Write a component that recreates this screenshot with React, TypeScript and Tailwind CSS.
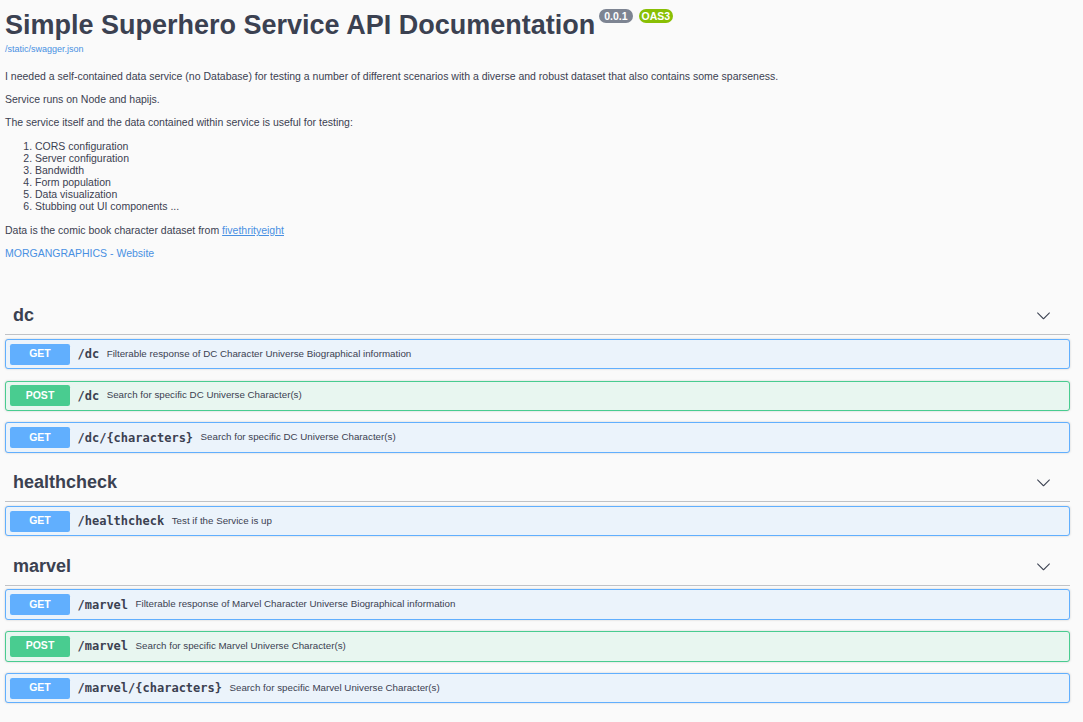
import React from "react";

type Op = {
  method: "GET" | "POST";
  path: string;
  summary: string;
};

type Tag = {
  name: string;
  ops: Op[];
};

const tags: Tag[] = [
  {
    name: "dc",
    ops: [
      { method: "GET", path: "/dc", summary: "Filterable response of DC Character Universe Biographical information" },
      { method: "POST", path: "/dc", summary: "Search for specific DC Universe Character(s)" },
      { method: "GET", path: "/dc/{characters}", summary: "Search for specific DC Universe Character(s)" },
    ],
  },
  {
    name: "healthcheck",
    ops: [{ method: "GET", path: "/healthcheck", summary: "Test if the Service is up" }],
  },
  {
    name: "marvel",
    ops: [
      { method: "GET", path: "/marvel", summary: "Filterable response of Marvel Character Universe Biographical information" },
      { method: "POST", path: "/marvel", summary: "Search for specific Marvel Universe Character(s)" },
      { method: "GET", path: "/marvel/{characters}", summary: "Search for specific Marvel Universe Character(s)" },
    ],
  },
];

function Chevron() {
  return (
    <svg width="15" height="15" viewBox="0 0 20 20" className="fill-[#3b4151]">
      <path d="M17.418 6.109c.272-.268.709-.268.979 0s.271.701 0 .969l-7.908 7.83c-.27.268-.707.268-.979 0l-7.908-7.83c-.27-.268-.27-.701 0-.969.271-.268.709-.268.979 0L10 13.25l7.418-7.141z" />
    </svg>
  );
}

function OpBlock({ op }: { op: Op }) {
  const isGet = op.method === "GET";
  return (
    <div
      className={
        isGet
          ? "mb-[11.25px] flex h-[30.5px] items-center rounded-[3px] border border-[#61affe] bg-[#ebf3fb] px-[4px] shadow-[0_0_2.25px_rgba(0,0,0,0.19)]"
          : "mb-[11.25px] flex h-[30.5px] items-center rounded-[3px] border border-[#49cc90] bg-[#e8f6f0] px-[4px] shadow-[0_0_2.25px_rgba(0,0,0,0.19)]"
      }
    >
      <span
        className={
          isGet
            ? "flex h-[21px] w-[60px] items-center justify-center rounded-[2.25px] bg-[#61affe] text-[10.5px] font-bold text-white"
            : "flex h-[21px] w-[60px] items-center justify-center rounded-[2.25px] bg-[#49cc90] text-[10.5px] font-bold text-white"
        }
      >
        {op.method}
      </span>
      <span className="px-[7.5px] font-['DejaVu_Sans_Mono',monospace] text-[12px] font-bold text-[#3b4151]">
        {op.path}
      </span>
      <span className="text-[9.75px] text-[#3b4151]">{op.summary}</span>
    </div>
  );
}

function TagSection({ tag }: { tag: Tag }) {
  return (
    <section className="flex flex-col">
      <div className="mb-[3.75px] flex h-[38px] items-center justify-between border-b border-[rgba(59,65,81,0.3)] pl-[8px] pr-[19px]">
        <h3 className="text-[18px] font-bold text-[#3b4151]">{tag.name}</h3>
        <Chevron />
      </div>
      <div>
        {tag.ops.map((op, i) => (
          <OpBlock key={i} op={op} />
        ))}
      </div>
    </section>
  );
}

export default function App() {
  return (
    <div className="min-h-[722px] bg-[#fafafa] pl-[5px] pr-[13px] pt-[10px] font-['Liberation_Sans',Arial,sans-serif] text-[#3b4151]">
      <div className="flex items-start">
        <h2 className="text-[27px] font-bold leading-[31px]">Simple Superhero Service API Documentation</h2>
        <span className="-mt-px ml-[4px] flex gap-[6px]">
          <span className="rounded-full bg-[#7d8492] px-[5px] py-[2px] text-[10.5px] font-bold leading-[10px] text-white">
            0.0.1
          </span>
          <span className="rounded-full bg-[#89bf04] px-[3px] py-[2px] text-[10.5px] font-bold leading-[10px] text-white">
            OAS3
          </span>
        </span>
      </div>
      <a className="mt-[3px] block text-[9px] leading-[10px] text-[#4990e2]">/static/swagger.json</a>

      <div className="mt-[16px] text-[10.5px] leading-[12px]">
        <p className="mb-[11px]">
          I needed a self-contained data service (no Database) for testing a number of different scenarios with a diverse and robust dataset that also contains some sparseness.
        </p>
        <p className="mb-[11px]">Service runs on Node and hapijs.</p>
        <p className="mb-[12px]">The service itself and the data contained within service is useful for testing:</p>
        <ol className="mb-[12px] list-decimal pl-[30px]">
          <li>CORS configuration</li>
          <li>Server configuration</li>
          <li>Bandwidth</li>
          <li>Form population</li>
          <li>Data visualization</li>
          <li>Stubbing out UI components ...</li>
        </ol>
        <p className="mb-[11px]">
          Data is the comic book character dataset from{" "}
          <a className="text-[#4990e2] underline">fivethrityeight</a>
        </p>
        <p>
          <a className="text-[#4990e2]">MORGANGRAPHICS - Website</a>
        </p>
      </div>

      <div className="mt-[38px]">
        {tags.map((t) => (
          <TagSection key={t.name} tag={t} />
        ))}
      </div>
    </div>
  );
}
